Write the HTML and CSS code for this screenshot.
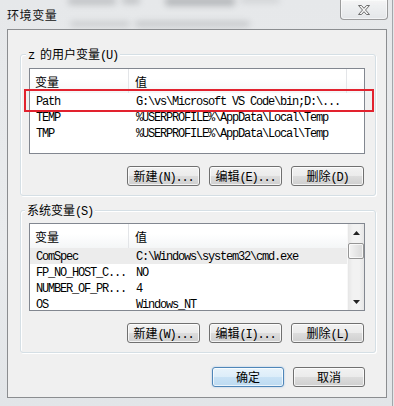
FILE: index.html
```html
<!DOCTYPE html>
<html lang="zh-CN">
<head>
<meta charset="utf-8">
<title>环境变量</title>
<link rel="stylesheet" href="styles.css">
</head>
<body>
<div class="window">
  <div class="titlebar">
    <div class="glass">
      <span class="blob b1"></span><span class="blob b2"></span><span class="blob b3"></span>
      <span class="blob b4"></span><span class="blob b5"></span><span class="blob b6"></span>
    </div>
    <span class="title">环境变量</span>
    <div class="close">
      <svg width="14" height="10" viewBox="0 0 14 10"><path d="M1.5 0.5h3l2.5 2.8 2.5-2.8h3l-4 4.5 4 4.5h-3l-2.5-2.8-2.5 2.8h-3l4-4.5z" fill="#f4f4f4" stroke="#6e6e6e" stroke-width="1" stroke-linejoin="round"/></svg>
    </div>
  </div>
  <div class="client">
    <div class="group group-user">
      <span class="group-label"><span class="mono">z </span>的用户变量<span class="mono">(U)</span></span>
      <div class="list list-user">
        <div class="list-main">
          <div class="header">
            <div class="hcell c1">变量</div>
            <div class="hcell c2 sep">值</div>
            <div class="hcell c3"></div>
          </div>
          <div class="row"><div class="cell c1">Path</div><div class="cell c2">G:\vs\Microsoft VS Code\bin;D:\...</div></div>
          <div class="row"><div class="cell c1">TEMP</div><div class="cell c2">%USERPROFILE%\AppData\Local\Temp</div></div>
          <div class="row"><div class="cell c1">TMP</div><div class="cell c2">%USERPROFILE%\AppData\Local\Temp</div></div>
        </div>
      </div>
      <div class="btn-row">
        <div class="btn">新建<span class="mono">(N)...</span></div>
        <div class="btn">编辑<span class="mono">(E)...</span></div>
        <div class="btn">删除<span class="mono">(D)</span></div>
      </div>
      <div class="highlight"></div>
    </div>

    <div class="group group-sys">
      <span class="group-label"><span>系统变量</span><span class="mono">(S)</span></span>
      <div class="list list-sys">
        <div class="list-main">
          <div class="header">
            <div class="hcell c1">变量</div>
            <div class="hcell c2 grow">值</div>
          </div>
          <div class="row selected"><div class="cell c1">ComSpec</div><div class="cell c2">C:\Windows\system32\cmd.exe</div></div>
          <div class="row"><div class="cell c1">FP_NO_HOST_C...</div><div class="cell c2">NO</div></div>
          <div class="row"><div class="cell c1">NUMBER_OF_PR...</div><div class="cell c2">4</div></div>
          <div class="row"><div class="cell c1">OS</div><div class="cell c2">Windows_NT</div></div>
        </div>
        <div class="scrollbar">
          <div class="sb-btn"><svg width="7" height="4" viewBox="0 0 7 4"><path d="M3.5 0L7 4H0z" fill="#222"/></svg></div>
          <div class="sb-thumb"></div>
          <div class="sb-track"></div>
          <div class="sb-btn"><svg width="7" height="4" viewBox="0 0 7 4"><path d="M0 0h7L3.5 4z" fill="#222"/></svg></div>
        </div>
      </div>
      <div class="btn-row">
        <div class="btn">新建<span class="mono">(W)...</span></div>
        <div class="btn">编辑<span class="mono">(I)...</span></div>
        <div class="btn">删除<span class="mono">(L)</span></div>
      </div>
    </div>

    <div class="dlg-row">
      <div class="btn btn-wide btn-default">确定</div>
      <div class="btn btn-wide">取消</div>
    </div>
  </div>
</div>
</body>
</html>
```
FILE: styles.css
```css
* { box-sizing: border-box; }

html, body {
  margin: 0;
  padding: 0;
}

body {
  width: 394px;
  height: 406px;
  overflow: hidden;
  background: #e4e6e8;
  font-family: "Noto Sans CJK SC", "Noto Sans", sans-serif;
  font-size: 12px;
  color: #000;
}

.mono {
  font-family: "Liberation Mono", "Noto Sans CJK SC", monospace;
  font-size: 12px;
  letter-spacing: -1.2px;
}

.window {
  width: 393px;
  height: 406px;
  display: flex;
  flex-direction: column;
  background: linear-gradient(#e6e8ea, #e9ebed 60%, #e2e5e8);
  border-right: 1px solid #a3a7ab;
}

/* ---------- title bar ---------- */
.titlebar {
  position: relative;
  height: 29px;
  flex: none;
  display: flex;
  align-items: flex-start;
  padding-left: 7px;
}

.glass {
  position: absolute;
  inset: 0;
  overflow: hidden;
}

.blob {
  position: absolute;
  display: block;
  background: #7d8084;
  filter: blur(3px);
  opacity: 0.35;
  border-radius: 3px;
}
.b1 { left: 68px; top: -3px; width: 48px; height: 8px; }
.b2 { left: 122px; top: -3px; width: 18px; height: 7px; }
.b3 { left: 165px; top: -3px; width: 70px; height: 9px; opacity: 0.45; }
.b4 { left: 70px; top: 21px; width: 60px; height: 6px; opacity: 0.25; }
.b5 { left: 135px; top: 21px; width: 115px; height: 6px; opacity: 0.3; }
.b6 { left: 240px; top: -3px; width: 40px; height: 6px; opacity: 0.2; }

.title {
  position: relative;
  margin-top: 7px;
  line-height: 16px;
  font-size: 12px;
  letter-spacing: 0.6px;
  color: #111;
}

.close {
  position: relative;
  margin-left: auto;
  margin-right: 4px;
  width: 48px;
  height: 20px;
  border: 1px solid rgba(70, 70, 70, 0.5);
  border-top: none;
  border-radius: 0 0 4px 4px;
  background: linear-gradient(rgba(255,255,255,0.55), rgba(225,228,231,0.5));
  box-shadow: inset 0 0 0 1px rgba(255,255,255,0.55);
  display: flex;
  align-items: center;
  justify-content: center;
}

/* ---------- client ---------- */
.client {
  flex: none;
  height: 369px;
  margin: 0 5px 0 7px;
  border: 1px solid #8b8d90;
  background: #f0f0f0;
  padding: 24px 10px 10px 12px;
  display: flex;
  flex-direction: column;
}

.group {
  position: relative;
  border: 1px solid #d5dfe5;
  border-radius: 3px;
  box-shadow: inset 1px 1px 0 #fff, 1px 1px 0 #fff;
  padding: 13px 10px 9px 8px;
  display: flex;
  flex-direction: column;
}

.group-sys {
  margin-top: 14px;
  padding-top: 12px;
}

.group-label {
  position: absolute;
  top: -9px;
  left: 5px;
  padding: 0 2px;
  line-height: 16px;
  background: #f0f0f0;
  white-space: nowrap;
}
.group-sys .group-label { left: 4px; }

/* ---------- list view ---------- */
.list {
  border: 1px solid #828790;
  background: #fff;
  overflow: hidden;
  display: flex;
}
.list-user { height: 86px; }
.list-sys { height: 88px; }

.list-main {
  flex: 1;
  min-width: 0;
  display: flex;
  flex-direction: column;
}

.header {
  flex: none;
  height: 24px;
  display: flex;
  background: linear-gradient(#ffffff, #ffffff 40%, #f4f6f7);
}

.hcell {
  height: 24px;
  line-height: 20px;
  padding-top: 3px;
  white-space: nowrap;
}
.hcell.c1 {
  width: 99px;
  padding-left: 5px;
  border-right: 1px solid #e3e5e8;
}
.hcell.c2 { padding-left: 6px; }
.hcell.sep {
  width: 218px;
  border-right: 1px solid #e3e5e8;
}
.hcell.c3 { flex: 1; }
.hcell.grow { flex: 1; }

.row {
  flex: none;
  height: 16px;
  display: flex;
  font-family: "Liberation Mono", monospace;
  font-size: 12px;
  letter-spacing: -1.2px;
  white-space: nowrap;
}
.row.selected { background: #ececec; }

.cell {
  height: 16px;
  padding-top: 2px;
  line-height: 15px;
}
.cell.c1 { width: 99px; padding-left: 6px; }
.cell.c2 { padding-left: 7px; }

/* ---------- scrollbar ---------- */
.scrollbar {
  flex: none;
  width: 17px;
  display: flex;
  flex-direction: column;
  background: linear-gradient(90deg, #e6e6e6, #f2f2f2 30%, #f2f2f2 70%, #e6e6e6);
  border-left: 1px solid #f8f8f8;
}
.sb-btn {
  flex: none;
  height: 17px;
  display: flex;
  align-items: center;
  justify-content: center;
}
.sb-thumb {
  flex: none;
  height: 16px;
  margin: 2px 0 0 0;
  width: 16px;
  border: 1px solid #959595;
  border-radius: 2px;
  background: linear-gradient(90deg, #f4f4f4, #e6e6e6 50%, #d9d9d9);
  box-shadow: inset 0 0 0 1px rgba(255,255,255,0.7);
}
.sb-track { flex: 1; }

/* ---------- buttons ---------- */
.btn-row {
  margin-top: 12px;
  display: flex;
  justify-content: flex-end;
  gap: 9px;
  padding-right: 1px;
}

.btn {
  width: 73px;
  height: 20px;
  border: 1px solid #707070;
  border-radius: 3px;
  background: linear-gradient(#f2f2f2 0%, #ebebeb 50%, #dddddd 50%, #cfcfcf 100%);
  box-shadow: inset 0 0 0 1px rgba(255,255,255,0.75);
  text-align: center;
  line-height: 18px;
  white-space: nowrap;
}

.dlg-row {
  margin-top: 14px;
  display: flex;
  justify-content: flex-end;
  gap: 9px;
  padding-right: 11px;
}
.btn-wide { width: 72px; }
.btn-default {
  border-color: #4f86b8;
  background: linear-gradient(#e8f3fb 0%, #dcedf9 50%, #c9e2f5 50%, #bcdaf1 100%);
  box-shadow: inset 0 0 0 1px rgba(255,255,255,0.7), 0 0 2px rgba(80,150,220,0.5);
}

/* ---------- annotation ---------- */
.highlight {
  position: absolute;
  left: 3px;
  top: 34px;
  width: 350px;
  height: 23px;
  border: 2px solid #e2222e;
}
```
